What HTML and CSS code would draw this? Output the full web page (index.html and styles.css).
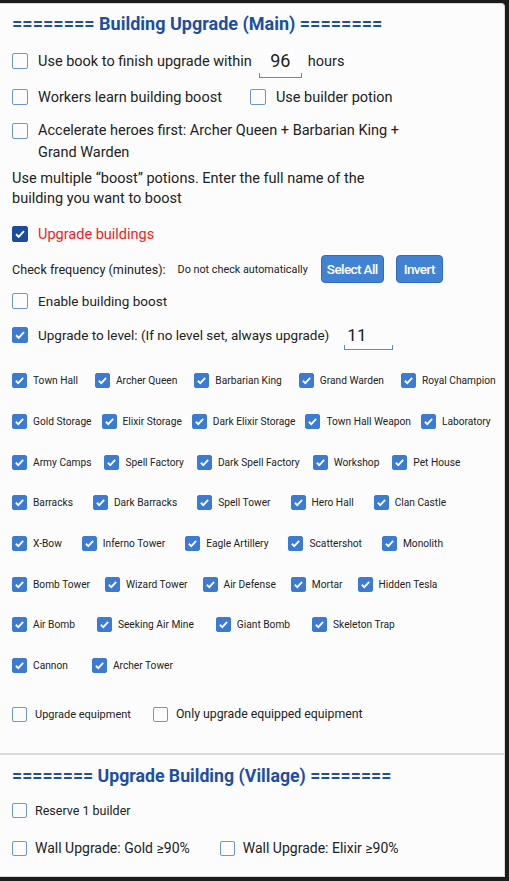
FILE: index.html
```html
<!DOCTYPE html>
<html lang="en">
<head>
<meta charset="UTF-8">
<meta name="viewport" content="width=device-width, initial-scale=1.0">
<title>Building Upgrade Settings</title>
<link rel="stylesheet" href="styles.css">
</head>
<body>

<!-- Main village upgrade options -->
<div class="card">
  <h2 class="title">======== Building Upgrade (Main) ========</h2>

  <div class="opt row-big">
    <span class="cb"></span>
    <span>Use book to finish upgrade within</span>
    <span class="field big">96</span>
    <span>hours</span>
  </div>

  <div class="opt row-big">
    <span class="cb"></span>
    <span class="w-workers">Workers learn building boost</span>
    <span class="cb"></span>
    <span>Use builder potion</span>
  </div>

  <div class="opt wrap">
    <span class="cb"></span>
    <span class="narrow">Accelerate heroes first: Archer Queen + Barbarian King + Grand Warden</span>
  </div>

  <p class="note">Use multiple “boost” potions. Enter the full name of the building you want to boost</p>

  <div class="opt red-row">
    <span class="cb dark"><svg viewBox="0 0 16 16"><path d="M3.5 8.3l3 3 6-6.6" /></svg></span>
    <span class="red">Upgrade buildings</span>
  </div>

  <div class="freq">
    <span>Check frequency (minutes):</span>
    <span class="small">Do not check automatically</span>
    <button class="btn sel">Select All</button>
    <button class="btn">Invert</button>
  </div>

  <div class="opt mid boost">
    <span class="cb"></span>
    <span>Enable building boost</span>
  </div>

  <div class="opt mid level">
    <span class="cb on"><svg viewBox="0 0 16 16"><path d="M3.5 8.3l3 3 6-6.6" /></svg></span>
    <span>Upgrade to level: (If no level set, always upgrade)</span>
    <span class="field lvl">11</span>
  </div>

  <div class="grid" id="grid"></div>

  <div class="opt small-row equip">
    <span class="cb sm"></span>
    <span class="gap-r">Upgrade equipment</span>
    <span class="cb sm"></span>
    <span class="equipped">Only upgrade equipped equipment</span>
  </div>
</div>

<!-- Builder base options -->
<div class="card second">
  <h2 class="title">======== Upgrade Building (Village) ========</h2>

  <div class="opt small-row reserve">
    <span class="cb sm"></span>
    <span>Reserve 1 builder</span>
  </div>

  <div class="opt small-row wall">
    <span class="cb sm"></span>
    <span class="gap-w">Wall Upgrade: Gold ≥90%</span>
    <span class="cb sm"></span>
    <span>Wall Upgrade: Elixir ≥90%</span>
  </div>
</div>

<script>
  // building list, one line each; gap is the spacing between items on that line
  var rows = [
    { gap: 17, names: ['Town Hall', 'Archer Queen', 'Barbarian King', 'Grand Warden', 'Royal Champion'] },
    { gap: 10, names: ['Gold Storage', 'Elixir Storage', 'Dark Elixir Storage', 'Town Hall Weapon', 'Laboratory'] },
    { gap: 13, names: ['Army Camps', 'Spell Factory', 'Dark Spell Factory', 'Workshop', 'Pet House'] },
    { gap: 20, names: ['Barracks', 'Dark Barracks', 'Spell Tower', 'Hero Hall', 'Clan Castle'] },
    { gap: 20, names: ['X-Bow', 'Inferno Tower', 'Eagle Artillery', 'Scattershot', 'Monolith'] },
    { gap: 15, names: ['Bomb Tower', 'Wizard Tower', 'Air Defense', 'Mortar', 'Hidden Tesla'] },
    { gap: 22, names: ['Air Bomb', 'Seeking Air Mine', 'Giant Bomb', 'Skeleton Trap'] },
    { gap: 24, names: ['Cannon', 'Archer Tower'] }
  ];

  var grid = document.getElementById('grid');
  var check = '<svg viewBox="0 0 16 16"><path d="M3.5 8.3l3 3 6-6.6" /></svg>';

  rows.forEach(function(row) {
    var line = document.createElement('div');
    line.className = 'grid-row';
    line.style.gap = row.gap + 'px';
    row.names.forEach(function(name) {
      var item = document.createElement('label');
      item.className = 'item';
      item.innerHTML = '<span class="cb on sm">' + check + '</span><span>' + name + '</span>';
      line.appendChild(item);
    });
    grid.appendChild(line);
  });
</script>

</body>
</html>
```

FILE: styles.css
```css
/* settings panel */
body {
  margin: 0;
  padding: 3px 4px 0 0;
  background-color: #1c1c1c;
  font-family: Roboto, "Liberation Sans", Arial, sans-serif;
  color: #222;
}

.card {
  background-color: #fcfcfc;
  border: 1px solid #d9d9d9;
  border-left: none;
  border-radius: 0 4px 0 0;
  padding: 9px 10px 24px 12px;
  display: flex;
  flex-direction: column;
}

.card.second {
  border-radius: 0;
  padding-top: 10px;
  padding-bottom: 13px;
}

.title {
  margin: 0;
  height: 22px;
  line-height: 22px;
  font-size: 18px;
  font-weight: 700;
  color: #1c4fa3;
  white-space: nowrap;
}

.second .title {
  font-size: 17.7px;
}

.opt {
  display: flex;
  align-items: center;
  font-size: 14.5px;
  white-space: nowrap;
}

.row-big {
  height: 36px;
}

.row-big:first-of-type {
  margin-top: 8px;
}

.opt .cb {
  margin-right: 10px;
}

.w-workers {
  margin-right: 28px;
}

.wrap {
  align-items: flex-start;
  margin-top: 5px;
  line-height: 22px;
  white-space: normal;
}

.wrap .cb {
  margin-top: 3px;
}

.narrow {
  max-width: 366px;
}

.note {
  margin: 5px 0 0;
  font-size: 14.5px;
  line-height: 20px;
  max-width: 380px;
}

.red-row {
  height: 30px;
  margin-top: 10px;
}

.red {
  color: #f01c1c;
}

/* checkboxes */
.cb {
  width: 16px;
  height: 16px;
  box-sizing: border-box;
  border: 1.5px solid #6c95d2;
  border-radius: 2px;
  flex-shrink: 0;
  display: inline-flex;
}

.cb.sm {
  width: 15px;
  height: 15px;
}

.cb.on,
.cb.dark {
  background-color: #3b7bd4;
  border-color: #3b7bd4;
}

.cb.dark {
  background-color: #1b4c9d;
  border-color: #1b4c9d;
}

.cb svg {
  width: 100%;
  height: 100%;
  fill: none;
  stroke: #fff;
  stroke-width: 2.2;
}

/* underlined number inputs */
.field {
  display: inline-block;
  text-align: center;
  color: #222;
  border-bottom: 1px solid #5a8ad0;
  background:
    linear-gradient(#5a8ad0, #5a8ad0) left bottom / 1px 4px no-repeat,
    linear-gradient(#5a8ad0, #5a8ad0) right bottom / 1px 4px no-repeat;
}

.field.big {
  width: 43px;
  height: 28px;
  line-height: 24px;
  font-size: 18px;
  margin: 4px 6px 0 7px;
}

.field.lvl {
  width: 49px;
  height: 26px;
  line-height: 22px;
  font-size: 17px;
  text-align: left;
  padding-left: 3px;
  box-sizing: border-box;
  margin: 4px 0 0 15px;
}

.freq {
  display: flex;
  align-items: center;
  height: 30px;
  margin-top: 5px;
  font-size: 12.6px;
  white-space: nowrap;
}

.small {
  font-size: 10.8px;
  margin-left: 12px;
}

.btn {
  height: 28px;
  border: 1px solid #2f6cbf;
  border-radius: 4px;
  background-color: #4282d3;
  color: #fff;
  font-family: Roboto, "Liberation Sans", sans-serif;
  font-size: 13.5px;
  font-weight: 500;
  letter-spacing: -0.6px;
  padding: 0;
  margin-left: 12px;
  width: 47px;
  white-space: nowrap;
}

.btn.sel {
  width: 63px;
  margin-left: 13px;
}

.mid {
  height: 30px;
  font-size: 13.5px;
}

.boost {
  margin-top: 2px;
}

.level {
  margin-top: 4px;
}

/* building checklist */
.grid {
  margin-top: 10.5px;
}

.grid-row {
  display: flex;
  align-items: center;
  height: 40.7px;
  font-size: 10.2px;
  white-space: nowrap;
}

.item {
  display: flex;
  align-items: center;
  gap: 6px;
}

.small-row {
  height: 30px;
  font-size: 11px;
}

.small-row .cb {
  margin-right: 8px;
}

.equip {
  margin-top: 13px;
}

.equipped {
  font-size: 12.3px;
}

.gap-r {
  margin-right: 22px;
}

.reserve {
  margin-top: 8px;
  font-size: 12.5px;
}

.wall {
  margin-top: 8px;
  font-size: 14px;
}

.gap-w {
  margin-right: 30px;
}
```
